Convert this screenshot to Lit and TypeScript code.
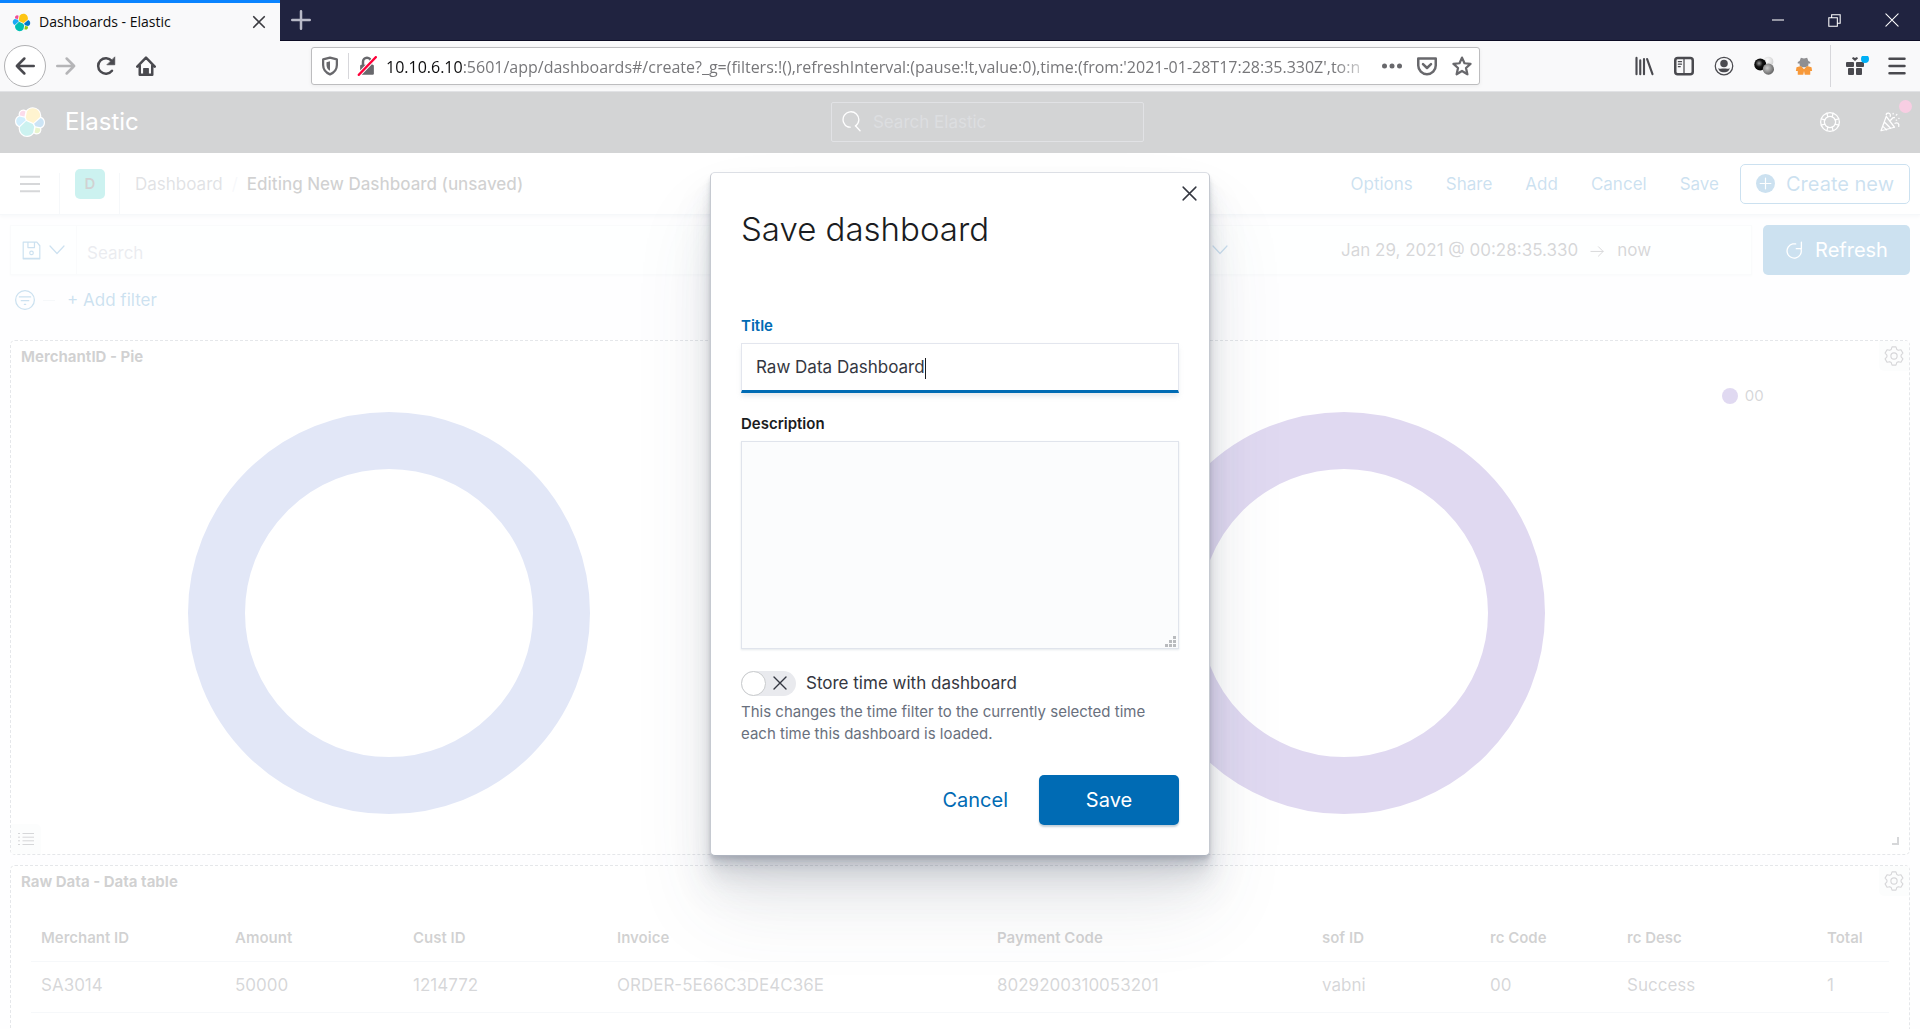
import { LitElement, html, svg, css } from "lit";
import { customElement } from "lit/decorators.js";

const cluster = (outline: boolean) => {
  const paths: [string, string][] = [
    ["#FEC514", "M12.58 13.787l7.002 3.211 7.066-6.213a7.849 7.849 0 00.152-1.557c0-4.287-3.464-7.775-7.722-7.775a7.7 7.7 0 00-6.35 3.353l-1.176 6.116 1.028 2.865z"],
    ["#00BFB3", "M5.333 21.228A7.86 7.86 0 005.18 22.8c0 4.298 3.473 7.797 7.743 7.797a7.715 7.715 0 006.385-3.378l1.166-6.096-1.556-2.988-7.03-3.213-6.554 6.306z"],
    ["#F04E98", "M5.288 9.067l4.8 1.137L11.14 4.73a3.785 3.785 0 00-6.06 2.998c0 .462.08.913.208 1.339z"],
    ["#1BA9F5", "M4.871 10.214C2.728 10.927 1.27 13 1.27 15.277c0 2.217 1.362 4.196 3.406 4.98l6.733-6.123-1.236-2.657-5.302-1.263z"],
    ["#93C90E", "M20.867 27.173a3.74 3.74 0 002.294.786 3.785 3.785 0 003.566-5.089l-4.794-1.13-1.066 5.433z"],
    ["#0077CC", "M21.84 20.487l5.28 1.245a5.389 5.389 0 003.608-5.068 5.345 5.345 0 00-3.413-4.985l-6.905 6.077 1.43 2.731z"],
  ];
  return html`<svg viewBox="0 0 32 32" aria-hidden="true" class="fill">
    ${outline ? paths.map(([, d]) => svg`<path d=${d} fill="#fff" stroke="#fff" stroke-width="2.6"/>`) : ""}
    ${paths.map(([c, d]) => svg`<path d=${d} fill=${c}/>`)}
  </svg>`;
};

const icon = (size: number, body: unknown, width = "1") => html`<svg
  width=${size} height=${size} viewBox="0 0 16 16" fill="none" stroke="currentColor"
  stroke-width=${width} stroke-linecap="round" stroke-linejoin="round" aria-hidden="true">${body}</svg>`;

const gearPath = (() => {
  const pts: string[] = [];
  const at = (deg: number, r: number) => {
    const a = ((deg - 90) * Math.PI) / 180;
    return `${(8 + r * Math.cos(a)).toFixed(2)} ${(8 + r * Math.sin(a)).toFixed(2)}`;
  };
  for (let i = 0; i < 6; i++) {
    const t = i * 60;
    pts.push(at(t - 23, 5.7), at(t - 12, 7.5), at(t + 12, 7.5), at(t + 23, 5.7));
  }
  return `M${pts.join("L")}Z`;
})();

const gear = icon(20, svg`<path d=${gearPath}/><circle cx="8" cy="8" r="2.5"/>`, "0.9");
const chevron = icon(16, svg`<path d="M1 4l7 7.5L15 4"/>`, "1.2");
const cross = (s: number, w = "1.2") => icon(s, svg`<path d="M2 2l12 12M14 2L2 14"/>`, w);
const burger = icon(20, svg`<path d="M0 2.2h16M0 8h16M0 13.800h16" stroke-linecap="butt"/>`, "1.7");

const shared = css`
  *, *::before, *::after { box-sizing: border-box; }
  button, input, textarea { font: inherit; color: inherit; margin: 0; }
  button { background: none; border: 0; padding: 0; cursor: pointer; display: inline-flex; align-items: center; justify-content: center; }
  a { color: inherit; text-decoration: none; }
  svg { display: block; flex: none; }
  svg.fill { width: 100%; height: 100%; }
`;

@customElement("browser-chrome")
class BrowserChrome extends LitElement {
  static styles = [shared, css`
    :host { display: block; flex: none; font-family: "Open Sans", "Noto Sans", sans-serif; color: #4a4a4f; }
    .tabs { display: flex; height: 41px; background: #202340; border-bottom: 1px solid #0c0c24; color: #d5d6e0; }
    .tab { width: 280px; height: 41px; border-top: 3px solid #0a84ff; background: #f9f9fa; color: #0c0c0d;
      display: flex; align-items: center; padding: 0 14px 0 12px; gap: 8px; font-size: 14px; line-height: 20px; }
    .favicon { width: 19px; height: 19px; }
    .tab-title { flex: 1; white-space: nowrap; }
    .tab button { color: #3b3b40; }
    .new-tab { margin-left: 11px; color: #b9bac8; }
    .window { margin-left: auto; display: flex; }
    .window button { width: 57px; color: #fff; }
    .nav { display: flex; align-items: center; height: 50px; background: #f9f9fa; padding: 0 13px 0 4px; }
    .history { display: flex; align-items: center; gap: 20px; width: 307px; flex: none; }
    .back { width: 42px; height: 42px; border: 1px solid #b1b1b3; border-radius: 50%; background: #fff; margin-right: -10px; }
    .forward { color: #b5b5b7; }
    .url { flex: 1; min-width: 0; height: 38px; display: flex; align-items: center; background: #fff; border: 1px solid #bdbdbf;
      border-radius: 3px; padding: 0 7px 0 8px; color: #68686c; box-shadow: 0 1px 4px rgba(0, 0, 0, .06); }
    .split { width: 1px; height: 26px; background: #d7d7db; margin: 0 8px; }
    .address { flex: 1; min-width: 0; overflow: hidden; white-space: nowrap; font-size: 16px; line-height: 24px; color: #77777a;
      margin: 2px 8px 0 9px; mask-image: linear-gradient(to right, #000 calc(100% - 40px), transparent); }
    .host { color: #0c0c0d; }
    .actions { display: flex; gap: 15px; }
    .tools { display: flex; align-items: center; gap: 20px; margin-left: 154px; }
    .tools button { width: 20px; height: 20px; }
    .rule { width: 1px; height: 42px; background: #d7d7db; margin: 0 -4px; }
  `];

  render() {
    return html`
      <div class="tabs">
        <div class="tab">
          <span class="favicon">${cluster(false)}</span>
          <span class="tab-title">Dashboards - Elastic</span>
          <button aria-label="Close tab">${cross(14, "1.9")}</button>
        </div>
        <button class="new-tab" aria-label="New tab">${icon(20, svg`<path d="M8 1v14M1 8h14"/>`, "2")}</button>
        <div class="window">
          <button aria-label="Minimize">${icon(12, svg`<path d="M0 8h16" stroke-linecap="butt"/>`, "1.4")}</button>
          <button aria-label="Restore">${icon(13, svg`<path d="M1 4.5h10.5V15H1zM4.5 4.500V1H15v10.500H11.500" stroke-linejoin="miter"/>`, "1.3")}</button>
          <button aria-label="Close window">${icon(14, svg`<path d="M1 1l14 14M15 1L1 15"/>`, "1.2")}</button>
        </div>
      </div>
      <div class="nav">
        <div class="history">
          <button class="back" aria-label="Back">${icon(20, svg`<path d="M15 8H1.500M7.500 2L1.500 8l6 6"/>`, "2")}</button>
          <button class="forward" aria-label="Forward">${icon(20, svg`<path d="M1 8h13.500M8.500 2l6 6-6 6"/>`, "2")}</button>
          <button aria-label="Reload">${icon(20, svg`<path d="M12.800 11.800A6.200 6.200 0 1 1 12.700 4"/><path d="M15 1v6H9z" fill="currentColor" stroke-width=".6"/>`, "2")}</button>
          <button aria-label="Home">${icon(20, svg`<path d="M1 8.500L8 1.300l7 7.200M3 7.500V15h10V7.500"/><path d="M6.200 15v-5h3.600v5z" fill="currentColor" stroke-width="1"/>`, "2")}</button>
        </div>
        <div class="url">
          ${icon(20, svg`<path d="M8 1.300l5.500 1.400v4.500c0 3.500-2 6-5.500 7.500-3.500-1.500-5.500-4-5.500-7.500V2.700z"/><path d="M8 4.200v7.600c-1.800-1-2.800-2.500-2.800-4.600V5z" fill="currentColor" stroke="none"/>`, "1.8")}
          <span class="split"></span>
          ${icon(20, svg`<rect x="2.500" y="7" width="11" height="8" rx="1" fill="currentColor" stroke="none"/><path d="M4.800 7V4.500a3.200 3.200 0 0 1 6.400 0V7"/><path d="M1.500 15L15 1" stroke="#fff" stroke-width="3.400"/><path d="M1.500 15L15 1" stroke="#ff0039"/>`, "2")}
          <div class="address"><span class="host">10.10.6.10</span>:5601/app/dashboards#/create?_g=(filters:!(),refreshInterval:(pause:!t,value:0),time:(from:'2021-01-28T17:28:35.330Z',to:n</div>
          <div class="actions">
            <button aria-label="Page actions">${icon(20, svg`<g fill="currentColor" stroke="none"><circle cx="2" cy="8" r="2"/><circle cx="8" cy="8" r="2"/><circle cx="14" cy="8" r="2"/></g>`)}</button>
            <button aria-label="Save to Pocket">${icon(20, svg`<path d="M1 2h14v5.500a7 7 0 0 1-14 0z"/><path d="M4.800 6.500L8 9.600l3.200-3.100"/>`, "2")}</button>
            <button aria-label="Bookmark">${icon(20, svg`<path d="M8 1.300l2 4.500 4.800.5-3.600 3.300 1.100 5L8 12l-4.300 2.600 1.100-5L1.200 6.300 6 5.800z"/>`, "1.8")}</button>
          </div>
        </div>
        <div class="tools">
          <button aria-label="Library">${icon(20, svg`<path d="M2 1.500v13M5 3.500v11M8 2.500v12M10.500 2.500l4.300 12"/>`, "1.7")}</button>
          <button aria-label="Sidebar">${icon(20, svg`<rect x="1" y="1.500" width="14" height="13" rx="2" stroke-width="2"/><path d="M8 2v12M3.500 4.500H6M3.500 6.500H6M3.500 8.500H5"/>`, "1")}</button>
          <button aria-label="Account">${icon(20, svg`<circle cx="8" cy="8" r="7"/><circle cx="8" cy="6" r="3" fill="currentColor" stroke="none"/><path d="M3.500 9.500c1 1 2.500.5 4.500.5s3.500.5 4.500-.5c0 2-2 3.500-4.500 3.500s-4.500-1.500-4.500-3.500z" fill="currentColor" stroke="none"/>`)}</button>
          <button aria-label="Proxy extension"><svg width="20" height="20" viewBox="0 0 16 16" aria-hidden="true">
            <defs>
              <radialGradient id="k" cx=".4" cy=".4" r=".6"><stop offset="0" stop-color="#999"/><stop offset=".5" stop-color="#111"/><stop offset="1" stop-color="#000"/></radialGradient>
              <radialGradient id="g" cx=".4" cy=".4" r=".7"><stop offset="0" stop-color="#ccc"/><stop offset="1" stop-color="#555"/></radialGradient>
              <radialGradient id="w" cx=".4" cy=".4" r=".7"><stop offset="0" stop-color="#fff"/><stop offset="1" stop-color="#ccc"/></radialGradient>
            </defs>
            <circle cx="11.500" cy="4.500" r="4" fill="url(#w)"/><circle cx="5" cy="6.800" r="4.800" fill="url(#k)"/><circle cx="11.500" cy="10.500" r="4.500" fill="url(#g)"/>
          </svg></button>
          <button aria-label="Privacy extension"><svg width="20" height="20" viewBox="0 0 16 16" aria-hidden="true">
            <path d="M4.500 4L5.500 1.300 8 2l2.500-.7 1 2.700 1.500.8v1.200h-1.500v1.500L9.500 9h-3L4.500 7.500V6H3V4.800z" fill="#8f8f92"/>
            <path d="M2 9l3.500-1L8 10.500 10.500 8 14 9l.5 3H13v3H8.600l-.6-3-.6 3H3v-3H1.500z" fill="#f7993a"/>
          </svg></button>
          <span class="rule"></span>
          <button aria-label="What's new"><svg width="24" height="20" viewBox="0 0 24 20" aria-hidden="true">
            <g fill="#4a4a4f"><rect x="1" y="6" width="8" height="5" rx="1"/><rect x="11" y="6" width="8" height="5" rx="1"/><rect x="3" y="12" width="6" height="7" rx="1"/><rect x="11" y="12" width="6" height="7" rx="1"/><path d="M10 5L7 2.500 8 1l2 1 2-1 1 1.500z"/></g>
            <circle cx="20" cy="3" r="4" fill="#00b0f6"/>
          </svg></button>
          <button aria-label="Open menu">${icon(20, svg`<path d="M2 2.200h12M2 8h12M2 13.800h12"/>`, "2")}</button>
        </div>
      </div>`;
  }
}

@customElement("donut-panel")
class DonutPanel extends LitElement {
  static properties = { heading: {}, color: {}, legend: {}, listButton: { type: Boolean } };
  declare heading: string;
  declare color: string;
  declare legend: string;
  declare listButton: boolean;

  static styles = [shared, css`
    :host { display: flex; flex-direction: column; position: relative; border: 1px dashed #7f8694; border-radius: 5px; background: #fff; min-width: 0; height: 515px; }
    header { display: flex; justify-content: space-between; height: 30px; padding-left: 10px; }
    h2 { margin: 0; font-size: 15px; line-height: 31px; font-weight: 700; color: #1a1c21; }
    .gear { width: 30px; height: 30px; background: #f1f2f5; border-radius: 0 5px 0 5px; color: #343741; }
    .chart { flex: 1; display: flex; min-height: 0; }
    .ring { flex: 4; display: grid; place-items: center; padding-left: 4px; }
    .legend { flex: 1; padding: 14px 0 0 3px; display: flex; align-items: flex-start; gap: 7px; font-size: 15px; line-height: 22px; color: #343741; }
    .dot { width: 16px; height: 16px; margin-top: 3px; }
    .toggle { position: absolute; left: 0; bottom: 0; width: 30px; height: 30px; background: #f1f2f5; border-radius: 0 5px 0 5px; color: #343741; }
    .grip { position: absolute; right: 10px; bottom: 9px; width: 7px; height: 8px; border: solid #343741; border-width: 0 2px 2px 0; }
  `];

  render() {
    return html`
      <header><h2>${this.heading}</h2><button class="gear" aria-label="Panel options">${gear}</button></header>
      <div class="chart">
        <div class="ring"><svg width="402" height="402" viewBox="0 0 402 402" role="img" aria-label=${this.heading || "Donut"}>
          <circle cx="201" cy="201" r="172.500" fill="none" stroke=${this.color} stroke-width="57"/></svg></div>
        <div class="legend">${this.legend ? html`<svg class="dot" viewBox="0 0 16 16" aria-hidden="true"><circle cx="8" cy="8" r="8" fill=${this.color}/></svg><span>${this.legend}</span>` : ""}</div>
      </div>
      ${this.listButton ? html`<button class="toggle" aria-label="Toggle legend">${icon(16, svg`<path d="M0 2.500h2M4.500 2.500H16M0 6.200h2M4.500 6.200H16M0 9.800h2M4.500 9.800H16M0 13.500h2M4.500 13.500H16" stroke-linecap="butt"/>`, "1")}</button>` : html`<span class="grip"></span>`}`;
  }
}

@customElement("save-dialog")
class SaveDialog extends LitElement {
  static styles = [shared, css`
    :host { display: block; }
    .modal { position: relative; width: 500px; border: 1px solid; border-color: #dcdfe5 #c6cad1 #aeb4bf; border-radius: 5px; background: #fff; color: #343741;
      padding: 30px; display: flex; flex-direction: column;
      box-shadow: 0 50px 80px rgba(65, 78, 101, .1), 0 30px 40px rgba(65, 78, 101, .1), 0 20px 20px rgba(65, 78, 101, .1),
        0 10px 10px rgba(65, 78, 101, .1), 0 5px 5px rgba(65, 78, 101, .1), 0 3px 3px rgba(65, 78, 101, .1); }
    .close { position: absolute; top: 5px; right: 5px; width: 30px; height: 30px; }
    h1 { margin: 0 0 60px; font-size: 33px; line-height: 52px; font-weight: 300; color: #1a1c21; }
    .label { font-size: 15px; line-height: 22px; font-weight: 600; color: #1a1c21; margin-bottom: 6px; }
    .label.active { color: #006bb4; }
    .field { position: relative; margin-bottom: 20px; }
    .text { display: block; width: 100%; height: 50px; border: 1px solid #e3e6ee; border-bottom: 3px solid #006bb4; padding: 0 14px; font-size: 17px; outline: 0;
      background: #fff; box-shadow: 0 4px 5px -1px rgba(152, 162, 179, .25); caret-color: transparent; }
    .caret { position: absolute; left: 184px; top: 15px; width: 1px; height: 21px; background: #1a1c21; }
    .area-box { position: relative; margin-bottom: 22px; }
    .area { display: block; width: 100%; height: 208px; border: 1px solid #e0e4ec; background: #fbfcfd; resize: none; padding: 14px; font-size: 17px; outline: 0;
      box-shadow: 0 1px 2px rgba(152, 162, 179, .25); }
    .resizer { position: absolute; right: 3px; bottom: 2px; }
    .switch { display: flex; align-items: center; gap: 10px; font-size: 17px; line-height: 25px; }
    .track { position: relative; width: 55px; height: 25px; }
    .track input { appearance: none; display: block; width: 55px; height: 25px; border-radius: 13px; background: #e9eaee; }
    .track input::before { content: ""; display: block; width: 25px; height: 25px; border-radius: 50%; background: #fff; border: 1px solid #c9cbcd; }
    .track svg { position: absolute; left: 31px; top: 4px; }
    .help { margin: 5px 0 30px; font-size: 15px; line-height: 22px; color: #69707d; }
    footer { display: flex; justify-content: flex-end; align-items: center; font-size: 20px; line-height: 30px; gap: 31px; }
    .cancel { color: #006bb4; }
    .save { width: 140px; height: 50px; border-radius: 5px; background: #006bb4; color: #fff; box-shadow: 0 2px 2px rgba(54, 97, 126, .3); }
  `];

  render() {
    return html`<div class="modal" role="dialog" aria-labelledby="heading">
      <button class="close" aria-label="Close">${cross(17, "1.4")}</button>
      <h1 id="heading">Save dashboard</h1>
      <label class="label active" for="title">Title</label>
      <div class="field"><input class="text" id="title" type="text" .value=${"Raw Data Dashboard"}><span class="caret"></span></div>
      <label class="label" for="description">Description</label>
      <div class="area-box"><textarea class="area" id="description"></textarea>
        <svg class="resizer" width="11" height="11" viewBox="0 0 11 11" fill="#b9bbbe" aria-hidden="true">
          <path d="M8 0h3v3H8zM8 4h3v3H8zM8 8h3v3H8zM4 4h3v3H4zM4 8h3v3H4zM0 8h3v3H0z"/></svg></div>
      <div class="switch"><span class="track"><input type="checkbox" role="switch" id="store">${cross(16, "1.4")}</span><label for="store">Store time with dashboard</label></div>
      <p class="help">This changes the time filter to the currently selected time each time this dashboard is loaded.</p>
      <footer><button class="cancel">Cancel</button><button class="save">Save</button></footer>
    </div>`;
  }
}

const columns = [
  ["Merchant ID", "SA3014", 194], ["Amount", "50000", 178], ["Cust ID", "1214772", 204], ["Invoice", "ORDER-5E66C3DE4C36E", 380],
  ["Payment Code", "8029200310053201", 325], ["sof ID", "vabni", 168], ["rc Code", "00", 137], ["rc Desc", "Success", 200], ["Total", "1", 72],
] as const;

@customElement("app-root")
class AppRoot extends LitElement {
  static styles = [shared, css`
    :host { display: flex; flex-direction: column; height: 100vh; overflow: hidden; font-family: Inter, "Liberation Sans", sans-serif; }
    .page { position: relative; flex: 1; min-height: 0; overflow: hidden; background: #fafbfd; color: #343741; font-size: 17px; line-height: 26px; }
    .mask { position: absolute; inset: 0; background: rgba(255, 255, 255, .8); display: flex; align-items: center; justify-content: center; padding-bottom: 92px; }
    .top { display: flex; justify-content: space-between; align-items: center; height: 62px; padding: 0 20px 2px 15px; background: #25282f; border-top: 1px solid #69707d; color: #fff; }
    .brand { display: flex; align-items: center; gap: 20px; padding-right: 16px; font-size: 24px; line-height: 30px; }
    .logo { width: 30px; height: 30px; }
    .find { display: flex; align-items: center; gap: 11px; width: 313px; height: 40px; border: 1px solid #69707d; border-radius: 2px; padding: 0 9px; }
    .find input { flex: 1; min-width: 0; background: none; border: 0; padding: 0; outline: 0; }
    .find input::placeholder { color: #535966; opacity: 1; }
    .top-right { display: flex; justify-content: flex-end; gap: 40px; }
    .news { position: relative; }
    .badge { position: absolute; right: -12px; top: -12px; width: 13px; height: 13px; border-radius: 50%; background: #dd0a73; }
    .sub { display: flex; align-items: center; height: 62px; padding: 0 10px 0 20px; background: #fff; border-bottom: 1px solid #d3dae6; box-shadow: 0 2px 3px rgba(152, 162, 179, .3); }
    .divider { width: 1px; height: 41px; align-self: flex-end; background: #d3dae6; }
    .burger { margin-right: 19px; }
    .avatar { width: 30px; height: 30px; margin: 0 14px 0 15px; border-radius: 5px; background: #00bfb3; color: #1a1c21; display: grid; place-items: center; font-size: 15px; font-weight: 600; }
    .crumbs { display: flex; gap: 9px; margin-left: 15px; }
    .crumb { color: #69707d; }
    .slash { color: #d3dae6; }
    .here { color: #1a1c21; font-weight: 500; }
    .menu { margin-left: auto; display: flex; align-items: center; gap: 33px; color: #006bb4; }
    .create { margin-left: -12px; width: 170px; height: 40px; border: 1px solid #006bb4; border-radius: 5px; font-size: 20px; gap: 11px; }
    .query { display: flex; gap: 11px; padding: 10px 10px 0; height: 60px; }
    .box { display: flex; align-items: center; border: 1px solid #e7eaf0; background: #fbfcfd; height: 50px; box-shadow: 0 1px 2px rgba(152, 162, 179, .2); }
    .search { flex: 1; }
    .saved { width: 66px; height: 48px; border-right: 1px solid #e7eaf0; color: #006bb4; gap: 8px; }
    .search input { flex: 1; border: 0; background: none; padding: 5px 10px 0; outline: 0; }
    .search input::placeholder { color: #98a2b3; opacity: 1; }
    .dates { width: 588px; }
    .quick { width: 76px; padding-left: 34px; color: #006bb4; }
    .range { flex: 1; display: flex; justify-content: center; align-items: center; gap: 12px; }
    .refresh { width: 147px; height: 50px; border-radius: 5px; background: #006bb4; color: #fff; font-size: 20px; gap: 11px; }
    .filters { display: flex; align-items: center; height: 26px; margin: 12px 15px 27px; gap: 8px; color: #006bb4; }
    .dash { width: 12px; height: 1px; background: #d3dae6; margin-right: 4px; }
    .grid { display: grid; grid-template-columns: 1fr 1fr; gap: 10px; padding: 0 10px; }
    .table-panel { grid-column: 1 / -1; min-height: 440px; border: 1px dashed #7f8694; border-radius: 5px; background: #fff; }
    .table-head { display: flex; justify-content: space-between; height: 30px; padding-left: 10px; }
    h2 { margin: 0; font-size: 15px; line-height: 31px; font-weight: 700; color: #1a1c21; }
    .gear { width: 30px; height: 30px; background: #f1f2f5; border-radius: 0 5px 0 5px; color: #343741; }
    .table-wrap { padding: 19px 20px; }
    table { width: 100%; table-layout: fixed; border-collapse: collapse; text-align: left; }
    th, td { padding: 0 10px; border-bottom: 1px solid #d3dae6; white-space: nowrap; }
    th { font-size: 15px; font-weight: 600; color: #1a1c21; height: 46px; }
    td { height: 51px; padding-bottom: 4px; color: #343741; }
  `];

  render() {
    return html`
      <browser-chrome></browser-chrome>
      <div class="page">
        <div class="top">
          <div class="brand"><span class="logo">${cluster(true)}</span><span>Elastic</span></div>
          <div class="find">${icon(21, svg`<path d="M5.500 12.200A6 6 0 1 1 11 11.500M11 11.200L14.500 15M5.500 12.200a6 6 0 0 0 1.500.1"/>`, "1")}<input type="search" aria-label="Search Elastic" placeholder="Search Elastic"></div>
          <div class="top-right">
            <button aria-label="Help">${icon(20, svg`<circle cx="8" cy="8" r="7.500"/><circle cx="8" cy="8" r="4.500"/><path d="M5.500 1l.800 3M10.500 1l-.800 3M5.500 15l.800-3M10.500 15l-.800-3M1 5.500l3 .800M1 10.500l3-.800M15 5.500l-3 .800M15 10.500l-3-.800"/>`)}</button>
            <button class="news" aria-label="News">${icon(20, svg`<path d="M5 3.500L.8 15l10.800-2.800zM3.500 8l5 5M2.300 11.500l3 2.800M5 3.500l6.600 8.700M5 2.200c0-2 4-2 3.200 1.300M8.500 6.500c1.500-1 1-2 2.500-2M12 9c2-.8 3.500.2 3 2.500M10.500 1v.5M13 2.500l.5-.5M15 5h.3M13 6.500h.3M11.500 4.500v-.2"/>`, "1")}<span class="badge"></span></button>
          </div>
        </div>
        <div class="sub">
          <button class="burger" aria-label="Toggle navigation">${burger}</button>
          <span class="divider"></span><span class="avatar">D</span><span class="divider"></span>
          <nav class="crumbs"><a class="crumb" href="#">Dashboard</a><span class="slash">/</span><span class="here">Editing New Dashboard (unsaved)</span></nav>
          <div class="menu">
            <button>Options</button><button>Share</button><button>Add</button><button>Cancel</button><button>Save</button>
            <button class="create">${icon(19, svg`<circle cx="8" cy="8" r="8" fill="currentColor" stroke="none"/><path d="M8 3.500v9M3.500 8h9" stroke="#fff"/>`)}Create new</button>
          </div>
        </div>
        <div class="query">
          <div class="box search">
            <button class="saved" aria-label="Saved queries">${icon(19, svg`<path d="M1 1h11.500L15 4v11H1zM5 1v4.500h5.500V1M1 14.500h14"/><circle cx="8" cy="10" r="1.500"/>`)}${chevron}</button>
            <input type="search" aria-label="Search" placeholder="Search">
          </div>
          <div class="box dates">
            <button class="quick" aria-label="Quick date select">${chevron}</button>
            <div class="range"><button>Jan 29, 2021 @ 00:28:35.330</button>${icon(15, svg`<path d="M1 9h13M9 4l5 5-5 5"/>`)}<button>now</button></div>
          </div>
          <button class="refresh">${icon(19, svg`<path d="M9 2.500H6.500a6 6 0 1 0 7 4.200M13.800 1v5.500H9.500"/>`, "1.1")}Refresh</button>
        </div>
        <div class="filters">
          <button aria-label="Filter options">${icon(20, svg`<circle cx="8" cy="8" r="7.500"/><path d="M3.500 5.500h9M5 8.500h6M7.500 11.500h1"/>`)}</button>
          <span class="dash"></span><button>+ Add filter</button>
        </div>
        <div class="grid">
          <donut-panel .heading=${"MerchantID - Pie"} .color=${"#6d87d7"} .listButton=${true}></donut-panel>
          <donut-panel .heading=${""} .color=${"#6641b8"} .legend=${"00"}></donut-panel>
          <section class="table-panel">
            <div class="table-head"><h2>Raw Data - Data table</h2><button class="gear" aria-label="Panel options">${gear}</button></div>
            <div class="table-wrap"><table>
              <colgroup>${columns.map(([, , w]) => html`<col width=${w}>`)}</colgroup>
              <thead><tr>${columns.map(([h]) => html`<th>${h}</th>`)}</tr></thead>
              <tbody><tr>${columns.map(([, v]) => html`<td>${v}</td>`)}</tr></tbody>
            </table></div>
          </section>
        </div>
        <div class="mask"><save-dialog></save-dialog></div>
      </div>`;
  }
}
